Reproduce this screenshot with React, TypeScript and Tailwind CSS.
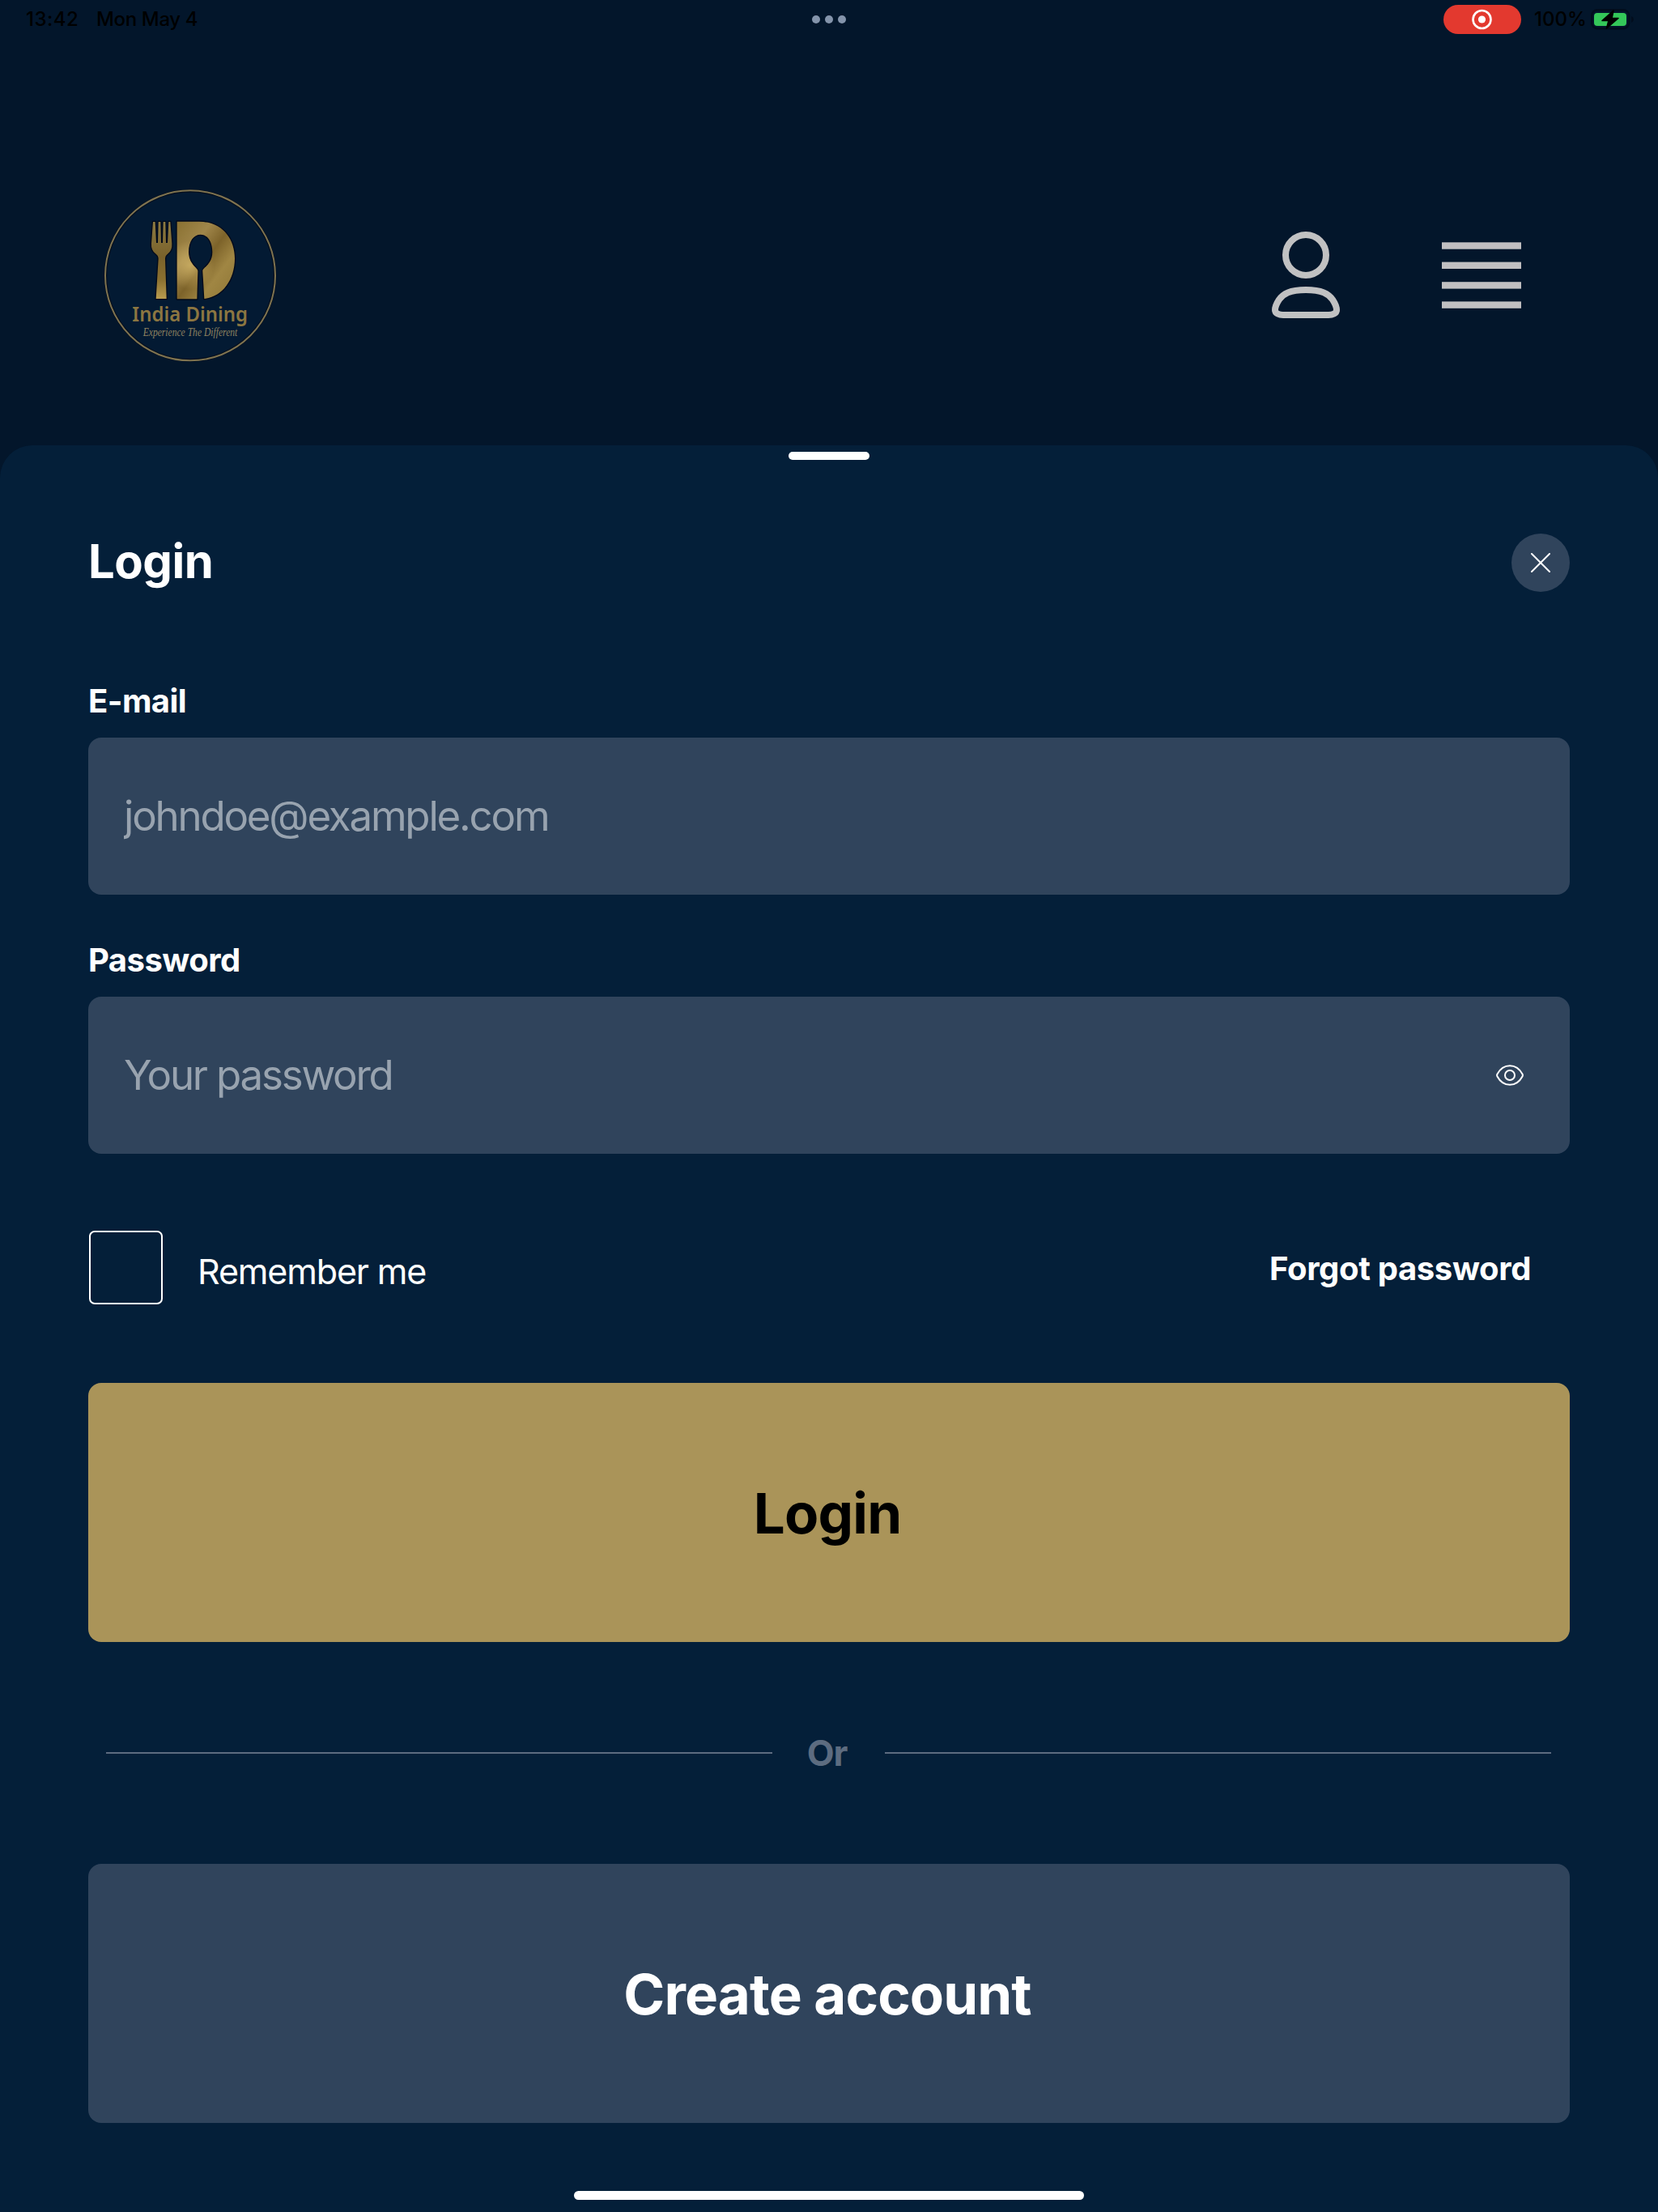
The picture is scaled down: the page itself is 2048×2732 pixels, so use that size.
import React, { useState } from "react";

interface FieldProps {
  id: string;
  label: string;
  type: string;
  placeholder: string;
  value: string;
  onChange: (value: string) => void;
  children?: React.ReactNode;
}

const Logo: React.FC = () => (
  <svg width="250" height="240" viewBox="0 0 750 720">
    <defs>
      <linearGradient id="gold" x1="0" y1="0" x2="1" y2="1">
        <stop offset="0" stopColor="#8a7132" />
        <stop offset="0.3" stopColor="#a0864a" />
        <stop offset="0.5" stopColor="#7d632a" />
        <stop offset="0.7" stopColor="#a08643" />
        <stop offset="1" stopColor="#8f7737" />
      </linearGradient>
      <linearGradient id="forkGold" x1="0" y1="0" x2="0" y2="1">
        <stop offset="0" stopColor="#8c7a42" />
        <stop offset="0.45" stopColor="#7a622b" />
        <stop offset="0.75" stopColor="#8a7030" />
        <stop offset="1" stopColor="#b99b4f" />
      </linearGradient>
      <radialGradient id="shine" cx="375" cy="322" r="90" gradientUnits="userSpaceOnUse">
        <stop offset="0" stopColor="#d2b568" stopOpacity="0.8" />
        <stop offset="1" stopColor="#d2b568" stopOpacity="0" />
      </radialGradient>
    </defs>
    <circle cx="375" cy="361" r="314" fill="#031a33" stroke="#000d1c" strokeWidth="11" />
    <circle cx="375" cy="361" r="315" fill="none" stroke="#7f7350" strokeWidth="6" />
    <g stroke="#00091a" strokeWidth="8" strokeLinejoin="round" paintOrder="stroke">
      <path
        fill="url(#forkGold)"
        d="M237 162h8l4 78h6l2-78h8l2 78h6l2-78h8l2 78h6l4-78h6l6 80q2 26-16 39q-9 6-9 18l5 148h-39l9-148q0-12-9-18q-19-13-17-39z"
      />
      <path
        fill="url(#gold)"
        d="M326 161h82c82 0 132 60 132 137c0 81-48 143-113 149l-6-103c0-12 36-24 36-70c0-42-20-65-44-65s-44 23-44 65c0 46 34 58 34 70l-3 104h-74z"
      />
    </g>
    <path
      fill="url(#shine)"
      d="M326 161h82c82 0 132 60 132 137c0 81-48 143-113 149l-6-103c0-12 36-24 36-70c0-42-20-65-44-65s-44 23-44 65c0 46 34 58 34 70l-3 104h-74z"
    />
    <text
      x="160"
      y="531"
      textLength="428"
      lengthAdjust="spacingAndGlyphs"
      fill="#8c7641"
      className="font-['Noto_Sans',sans-serif] text-[74px] font-semibold"
    >
      India Dining
    </text>
    <text
      x="200"
      y="585"
      textLength="350"
      lengthAdjust="spacingAndGlyphs"
      fill="#8f8260"
      className="font-['Liberation_Serif',serif] text-[44px] italic"
    >
      Experience The Different
    </text>
  </svg>
);

const StatusBar: React.FC = () => (
  <div className="grid h-12 grid-cols-3 items-center px-7 text-[24px] leading-6 font-medium text-black">
    <div className="flex gap-6 pl-1">
      <span className="w-[63px] tracking-[0.5px]">13:42</span>
      <span className="tracking-[-0.35px]">Mon May 4</span>
    </div>
    <div className="flex justify-center gap-1.5">
      <span className="size-2.5 rounded-full bg-[#8494ab]" />
      <span className="size-2.5 rounded-full bg-[#8494ab]" />
      <span className="size-2.5 rounded-full bg-[#8494ab]" />
    </div>
    <div className="flex items-center justify-end">
      <span className="mr-4 flex h-9 w-24 items-center justify-center rounded-full bg-[#e3392f]">
        <svg width="26" height="26" viewBox="0 0 26 26">
          <circle cx="12.5" cy="13" r="11" fill="none" stroke="#fff" strokeWidth="2.6" />
          <circle cx="12.5" cy="13" r="4.6" fill="#fff" />
        </svg>
      </span>
      <span className="w-[70px]">100%</span>
      <svg width="55" height="28" viewBox="0 0 55 28">
        <rect x="1.2" y="2.2" width="46" height="23" rx="7" fill="none" stroke="#020d1d" strokeWidth="2.4" />
        <rect x="4" y="6" width="40" height="16" rx="4" fill="#34c759" />
        <path d="M50 10q3 1.5 3 4t-3 4z" fill="#020d1d" />
        <path
          d="M28 3L14 15.5h8L19.5 25L34 12.5h-8z"
          fill="#000"
          stroke="#000"
          strokeWidth="1.6"
          strokeLinejoin="round"
        />
      </svg>
    </div>
  </div>
);

const Field: React.FC<FieldProps> = ({
  id,
  label,
  type,
  placeholder,
  value,
  onChange,
  children,
}) => (
  <div className="flex flex-col">
    <label htmlFor={id} className="text-[40px] leading-[48px] font-bold tracking-[-0.55px]">
      {label}
    </label>
    <div className="mt-[21px] flex h-[194px] items-center rounded-2xl bg-[#30445c] pr-[57px] pl-11">
      <input
        id={id}
        type={type}
        placeholder={placeholder}
        value={value}
        onChange={(e) => onChange(e.target.value)}
        className="h-16 flex-1 bg-transparent text-[51px] tracking-[-2.2px] outline-none placeholder:text-[#98a3af]"
      />
      {children}
    </div>
  </div>
);

const App: React.FC = () => {
  const [email, setEmail] = useState("");
  const [password, setPassword] = useState("");
  const [showPassword, setShowPassword] = useState(false);
  const [remember, setRemember] = useState(false);

  return (
    <div className="flex h-[2732px] w-[2048px] flex-col overflow-hidden bg-[#03162b] font-['Inter',sans-serif] text-white">
      <StatusBar />
      <header className="flex h-[502px] items-start justify-between pt-[172px] pr-[169px] pl-[110px]">
        <Logo />
        <div className="flex items-center gap-[126px] pt-[66px]">
          <svg width="84" height="108" viewBox="0 0 84 108" fill="none" stroke="#c1c1c2" strokeWidth="8">
            <circle cx="42" cy="29" r="25" />
            <path d="M42 72C22 72 14 77 9 84C5 90 4 94 4 97C4 101 9 103 14 103H70C75 103 80 101 80 97C80 94 79 90 75 84C70 77 62 72 42 72Z" />
          </svg>
          <svg width="98" height="84" viewBox="0 0 98 84" fill="#c1bfc1">
            <rect y="1.3" width="98" height="8.400" />
            <rect y="25.600" width="98" height="8.400" />
            <rect y="50.200" width="98" height="8.400" />
            <rect y="74.400" width="98" height="8.400" />
          </svg>
        </div>
      </header>

      <main className="flex flex-1 flex-col rounded-t-[40px] bg-[#041f39] px-[109px] pt-2">
        <div className="h-2.5 w-25 self-center rounded-full bg-white" />

        <div className="mt-[91px] flex h-[72px] items-start justify-between">
          <h1 className="text-[58px] leading-[68px] font-bold tracking-[-0.5px]">Login</h1>
          <button className="flex size-[72px] items-center justify-center rounded-full bg-[#30445c]">
            <svg width="24" height="24" viewBox="0 0 24 24" stroke="#fff" strokeWidth="2" strokeLinecap="round">
              <path d="M1 1L23 23M23 1L1 23" />
            </svg>
          </button>
        </div>

        <form className="mt-[111px] flex flex-col" onSubmit={(e) => e.preventDefault()}>
          <div className="flex flex-col gap-[57px]">
            <Field
              id="email"
              label="E-mail"
              type="email"
              placeholder="johndoe@example.com"
              value={email}
              onChange={setEmail}
            />
            <Field
              id="password"
              label="Password"
              type={showPassword ? "text" : "password"}
              placeholder="Your password"
              value={password}
              onChange={setPassword}
            >
              <button type="button" onClick={() => setShowPassword(!showPassword)}>
                <svg width="34" height="26" viewBox="0 0 34 26" fill="none" stroke="#fff" strokeWidth="2">
                  <path d="M1.5 11.5C5 5 10.5 1.2 17 1.2S29 5 32.5 11.5Q33.3 13 32.5 14.5C29 21 23.5 24.8 17 24.8S5 21 1.5 14.5Q0.7 13 1.5 11.5Z" />
                  <circle cx="17" cy="13" r="6" />
                </svg>
              </button>
            </Field>
          </div>

          <div className="mt-[95px] flex h-[91px] items-center justify-between pr-12 pl-px">
            <label className="flex items-center gap-[43px]">
              <input
                type="checkbox"
                checked={remember}
                onChange={() => setRemember(!remember)}
                className="size-[91px] appearance-none rounded-[7px] border-2 border-white checked:bg-[#aa9459]"
              />
              <span className="pt-[9px] text-[43px] leading-[52px] tracking-[-1.15px]">Remember me</span>
            </label>
            <a href="#" className="pt-0.5 text-[40px] leading-[48px] font-bold tracking-[-0.35px]">
              Forgot password
            </a>
          </div>

          <button
            type="submit"
            className="mt-[97px] h-80 rounded-2xl bg-[#aa9459] pt-[3px] pr-1 text-[69px] font-bold tracking-[-0.8px] text-black"
          >
            Login
          </button>
        </form>

        <div className="my-[110px] flex h-[54px] items-center pr-[23px] pl-[22px] text-[#5d6c80]">
          <span className="h-0.5 flex-1 bg-[#5d6c80]" />
          <span className="w-[139px] pr-1 text-center text-[44px] leading-[54px] font-bold tracking-[-1.2px]">
            Or
          </span>
          <span className="h-0.5 flex-1 bg-[#5d6c80]" />
        </div>

        <button className="h-80 rounded-2xl bg-[#30445c] pt-[3px] pr-1 text-[69px] font-bold tracking-[-0.9px]">
          Create account
        </button>

        <div className="mt-[84px] h-[11px] w-[630px] self-center rounded-full bg-white" />
      </main>
    </div>
  );
};

export default App;
